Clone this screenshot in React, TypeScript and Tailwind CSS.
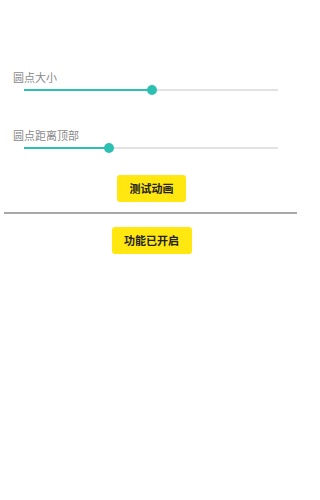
import React from "react";

const font = { fontFamily: '"Noto Sans CJK SC", "Noto Sans", sans-serif' };

function Slider({ percent }: { percent: number }) {
  return (
    <div className="relative ml-[24px] mr-[22px] h-[12px] flex items-center">
      <div className="w-full h-[2px] bg-[#e2e2e2]" />
      <div
        className="absolute left-0 top-[5px] h-[2px] bg-[#2fbfb2]"
        style={{ width: `${percent}%` }}
      />
      <div
        className="absolute top-[1px] w-[10px] h-[10px] rounded-full bg-[#2cc0b3] -ml-[5px]"
        style={{ left: `${percent}%` }}
      />
    </div>
  );
}

export default function App() {
  return (
    <div className="w-[300px] h-[500px] bg-white flex flex-col" style={font}>
      <div className="pt-[70px] pl-[13px] text-[11px] leading-[14px] text-[#8a8a8a]">圆点大小</div>
      <Slider percent={50.3} />
      <div className="mt-[32px] pl-[13px] text-[11px] leading-[14px] text-[#8a8a8a]">圆点距离顶部</div>
      <Slider percent={33.5} />
      <div className="mt-[21px] flex justify-center pl-[3px]">
        <div className="w-[69px] h-[27px] rounded-[3px] bg-[#ffe70f] flex items-center justify-center text-[11px] font-bold text-[#222]">
          测试动画
        </div>
      </div>
      <div className="mt-[10px] ml-[4px] mr-[3px] h-[2px] bg-[#a8a8a8]" />
      <div className="mt-[13px] flex justify-center pl-[3px]">
        <div className="w-[80px] h-[27px] rounded-[3px] bg-[#ffe70f] flex items-center justify-center text-[11px] font-bold text-[#222]">
          功能已开启
        </div>
      </div>
    </div>
  );
}
